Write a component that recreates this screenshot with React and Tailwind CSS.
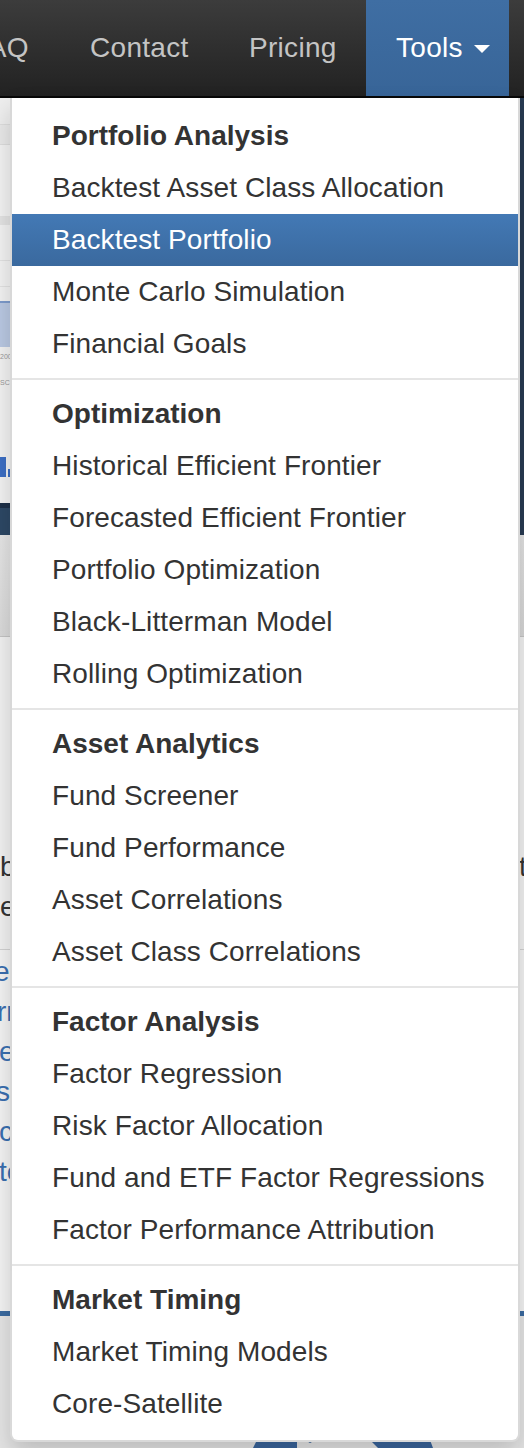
const sections = [
  {
    title: "Portfolio Analysis",
    items: ["Backtest Asset Class Allocation", "Backtest Portfolio", "Monte Carlo Simulation", "Financial Goals"],
  },
  {
    title: "Optimization",
    items: [
      "Historical Efficient Frontier",
      "Forecasted Efficient Frontier",
      "Portfolio Optimization",
      "Black-Litterman Model",
      "Rolling Optimization",
    ],
  },
  {
    title: "Asset Analytics",
    items: ["Fund Screener", "Fund Performance", "Asset Correlations", "Asset Class Correlations"],
  },
  {
    title: "Factor Analysis",
    items: [
      "Factor Regression",
      "Risk Factor Allocation",
      "Fund and ETF Factor Regressions",
      "Factor Performance Attribution",
    ],
  },
  {
    title: "Market Timing",
    items: ["Market Timing Models", "Core-Satellite"],
  },
];

const ACTIVE = "Backtest Portfolio";

// page strip behind the menu, left edge
const LeftStrip = () => (
  <div className="w-[12px] flex flex-col overflow-hidden">
    <div className="h-[405px] flex flex-col bg-[#f3f3f3]">
      <div className="h-[27px] bg-[#eeeeee] border-b border-[#dddddd]" />
      <div className="h-[20px] bg-[#e9e9e9] border-b border-[#dddddd]" />
      <div className="h-[72px] border-b border-[#e2e2e2]" />
      <div className="h-[8px] bg-[#e3e3e3]" />
      <div className="h-[36px] border-b border-[#e2e2e2]" />
      <div className="h-[26px] border-b border-[#e2e2e2]" />
      <div className="h-[14px]" />
      <div className="h-[46px] bg-[#bac9e3] border-t-2 border-[#7d9bcc]" />
      <div className="h-[110px] flex flex-col gap-[18px] pt-[6px] text-[7px] leading-[8px] text-[#999]">
        <span>2007</span>
        <span>SC</span>
      </div>
      <div className="h-[20px] flex items-end gap-[2px]">
        <div className="w-[6px] h-[20px] bg-[#3d6fc4]" />
        <div className="w-[3px] h-[8px] bg-[#3d6fc4]" />
      </div>
      <div className="flex-1" />
    </div>
    <div className="h-[5px] bg-[#1c2f47]" />
    <div className="h-[27px] bg-[#2d4865]" />
    <div className="h-[102px] bg-linear-to-b from-[#e6e6e6] to-[#dadada] border-b border-[#c4c4c4]" />
    <div className="h-[313px] bg-[#f2f2f2] border-b border-[#d2d2d2] pt-[210px] text-[28px] leading-[40px] text-[#333] whitespace-nowrap">
      <div>b</div>
      <div>e</div>
    </div>
    <div className="h-[361px] bg-[#f4f4f4] pt-[2px] text-[28px] leading-[40px] text-[#3a6fb0] whitespace-nowrap">
      <div className="ml-[-6px]">er</div>
      <div className="ml-[-3px]">rr</div>
      <div className="ml-[-1px]">el</div>
      <div className="ml-[-4px]">s</div>
      <div className="ml-[-1px]">co</div>
      <div className="ml-[-1px]">te</div>
    </div>
    <div className="h-[5px] bg-[#3a6aa0]" />
    <div className="flex-1 bg-[#e5e5e5]" />
  </div>
);

// page strip behind the menu, right edge
const RightStrip = () => (
  <div className="w-[6px] flex flex-col overflow-hidden">
    <div className="h-[437px] bg-[#283b52]" />
    <div className="h-[102px] bg-linear-to-b from-[#e2e2e2] to-[#d6d6d6] border-b border-[#c4c4c4]" />
    <div className="h-[313px] bg-[#f2f2f2] border-b border-[#d2d2d2] pt-[210px] text-[28px] leading-[40px] text-[#333] whitespace-nowrap">
      <div className="ml-[1px]">t</div>
    </div>
    <div className="h-[361px] bg-[#f4f4f4]" />
    <div className="h-[5px] bg-[#3a6aa0]" />
    <div className="flex-1 bg-[#e4e4e4]" />
  </div>
);

const MenuItem = ({ label }) => {
  const active = label === ACTIVE;
  return (
    <a
      href="#"
      className={
        active
          ? "block px-[40px] py-[6px] text-[28px] leading-[40px] tracking-[0.1px] whitespace-nowrap text-white bg-linear-to-b from-[#4379b5] to-[#3a699e]"
          : "block px-[40px] py-[6px] text-[28px] leading-[40px] tracking-[0.1px] whitespace-nowrap text-[#333]"
      }
    >
      {label}
    </a>
  );
};

export default function App() {
  return (
    <div
      className="relative w-[524px] h-[1448px] overflow-hidden bg-[#e5e5e5] flex flex-col"
      style={{ fontFamily: '"Liberation Sans", Arial, sans-serif' }}
    >
      {/* Navbar */}
      <nav className="h-[98px] shrink-0 flex items-stretch bg-linear-to-b from-[#3c3c3c] to-[#222] border-b-2 border-[#080808] text-[28px] tracking-[0.3px] whitespace-nowrap">
        <a href="#" className="ml-[-58px] w-[118px] pl-[30px] flex items-center text-[#c4c4c4]">
          FAQ
        </a>
        <a href="#" className="w-[159px] pl-[30px] flex items-center text-[#c4c4c4]">
          Contact
        </a>
        <a href="#" className="w-[147px] pl-[30px] flex items-center text-[#c4c4c4]">
          Pricing
        </a>
        <a
          href="#"
          className="w-[143px] pl-[30px] flex items-center gap-[11px] text-white bg-linear-to-b from-[#3f6ea3] to-[#386598]"
        >
          Tools
          <span className="mt-[2px] w-0 h-0 border-x-[8px] border-x-transparent border-t-[8px] border-t-white" />
        </a>
      </nav>

      {/* Page behind the open menu */}
      <div className="flex-1 flex">
        <LeftStrip />
        <div className="flex-1 flex flex-col justify-end">
          <svg width="506" height="8" viewBox="0 0 506 8" className="block">
            <path d="M245 0 L285 0 L285 8 L241 8 Z" fill="#3a659c" />
            <path d="M293 0 L304 0 L298 3 Z" fill="#3a659c" />
            <path d="M358 0 L418 0 L421 8 L366 8 Z" fill="#3a659c" />
          </svg>
        </div>
        <RightStrip />
      </div>

      {/* Tools dropdown */}
      <div className="absolute left-[10px] top-[98px] w-[510px] bg-white border-2 border-t-0 border-black/15 rounded-b-[8px] pt-[12px] pb-[10px] shadow-[0_12px_24px_rgba(0,0,0,0.175)]">
        {sections.map((section, i) => (
          <div key={section.title}>
            {i > 0 && <div className="my-[8px] h-[2px] bg-[#e5e5e5]" />}
            <div className="px-[40px] py-[6px] text-[28px] leading-[40px] font-bold text-[#333] whitespace-nowrap">
              {section.title}
            </div>
            {section.items.map((item) => (
              <MenuItem key={item} label={item} />
            ))}
          </div>
        ))}
      </div>
    </div>
  );
}
